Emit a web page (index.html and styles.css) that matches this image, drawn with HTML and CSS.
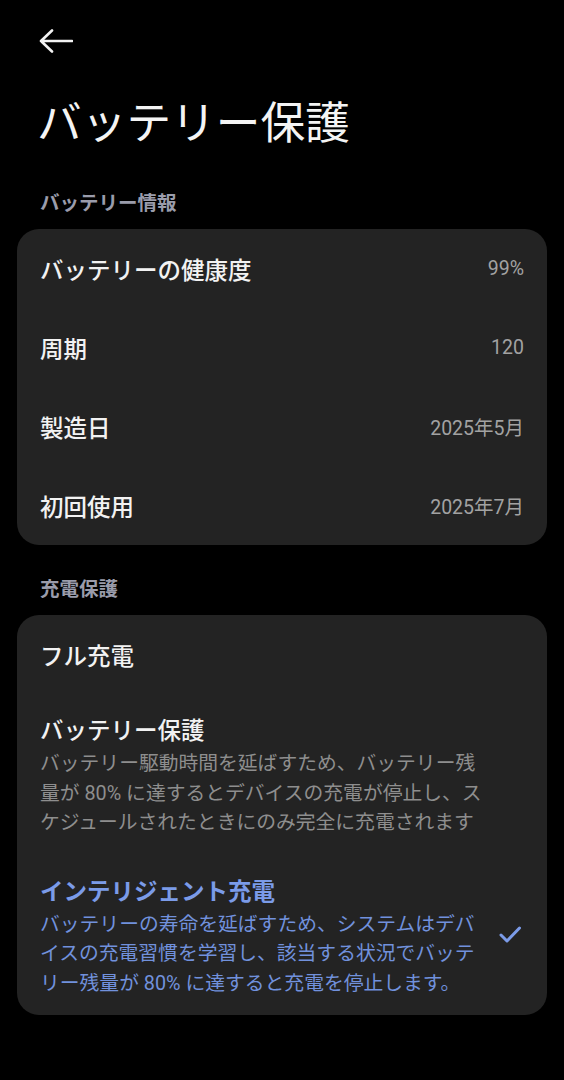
FILE: index.html
```html
<!DOCTYPE html>
<html lang="ja">
<head>
<meta charset="utf-8">
<link rel="stylesheet" href="styles.css">
</head>
<body>
<div class="page">
  <div class="topbar">
    <svg class="back" width="34" height="24" viewBox="0 0 34 24"><path d="M2 12H33M13 1.5L2 12L13 22.5" fill="none" stroke="#f2f2f2" stroke-width="2.6" stroke-linecap="round" stroke-linejoin="round"/></svg>
  </div>
  <h1 class="title">バッテリー保護</h1>

  <div class="section-label">バッテリー情報</div>
  <div class="card">
    <div class="row"><span class="label">バッテリーの健康度</span><span class="value">99%</span></div>
    <div class="row"><span class="label">周期</span><span class="value">120</span></div>
    <div class="row"><span class="label">製造日</span><span class="value">2025年5月</span></div>
    <div class="row"><span class="label">初回使用</span><span class="value">2025年7月</span></div>
  </div>

  <div class="section-label second">充電保護</div>
  <div class="card">
    <div class="row"><span class="label">フル充電</span></div>
    <div class="item">
      <div class="item-text">
        <div class="item-title">バッテリー保護</div>
        <div class="item-desc">バッテリー駆動時間を延ばすため、バッテリー残<br>量が 80% に達するとデバイスの充電が停止し、ス<br>ケジュールされたときにのみ完全に充電されます</div>
      </div>
    </div>
    <div class="item selected">
      <div class="item-text">
        <div class="item-title">インテリジェント充電</div>
        <div class="item-desc">バッテリーの寿命を延ばすため、システムはデバ<br>イスの充電習慣を学習し、該当する状況でバッテ<br>リー残量が 80% に達すると充電を停止します。</div>
      </div>
      <svg class="check" width="24" height="20" viewBox="0 0 24 20"><path d="M3 10L9 16L21.5 3" fill="none" stroke="#7b9be8" stroke-width="3" stroke-linecap="round" stroke-linejoin="round"/></svg>
    </div>
  </div>
</div>
</body>
</html>
```

FILE: styles.css
```css
html, body {
  margin: 0;
  padding: 0;
  background: #000;
}
body {
  font-family: Roboto, "Noto Sans CJK JP", sans-serif;
  color: #f2f2f2;
}
.page {
  width: 564px;
  height: 1080px;
  overflow: hidden;
}
.topbar {
  height: 70px;
  padding: 29px 0 0 39px;
  box-sizing: border-box;
}
.back {
  display: block;
}
.title {
  margin: 26px 0 0 0;
  padding-left: 37px;
  font-size: 44.7px;
  line-height: 56px;
  font-weight: 400;
  color: #f4f4f4;
}
.section-label {
  margin: 39px 0 0 0;
  padding-left: 40px;
  font-size: 19.5px;
  line-height: 26px;
  font-weight: 700;
  color: #9a9cab;
}
.section-label.second {
  margin-top: 32px;
}
.card {
  margin: 12px 17px 0 17px;
  background: #232323;
  border-radius: 22px;
  overflow: hidden;
}
.row {
  height: 79px;
  display: flex;
  align-items: center;
  justify-content: space-between;
  padding: 0 23px;
}
.label {
  font-size: 23.5px;
  font-weight: 500;
  color: #f2f2f2;
}
.value {
  font-size: 19.5px;
  color: #a2a2a2;
}
.item {
  display: flex;
  align-items: center;
  justify-content: space-between;
  padding: 21px 25px 17px 23px;
}
.item-title {
  font-size: 23.5px;
  line-height: 32px;
  font-weight: 500;
  color: #f2f2f2;
}
.item-desc {
  margin-top: 2px;
  font-size: 19.8px;
  line-height: 29.5px;
  color: #8e8e8e;
}
.selected .item-title {
  color: #7b9be8;
  font-weight: 700;
}
.selected .item-desc {
  color: #7191dc;
}
.check {
  display: block;
  flex: none;
  margin-top: -4px;
}
```
